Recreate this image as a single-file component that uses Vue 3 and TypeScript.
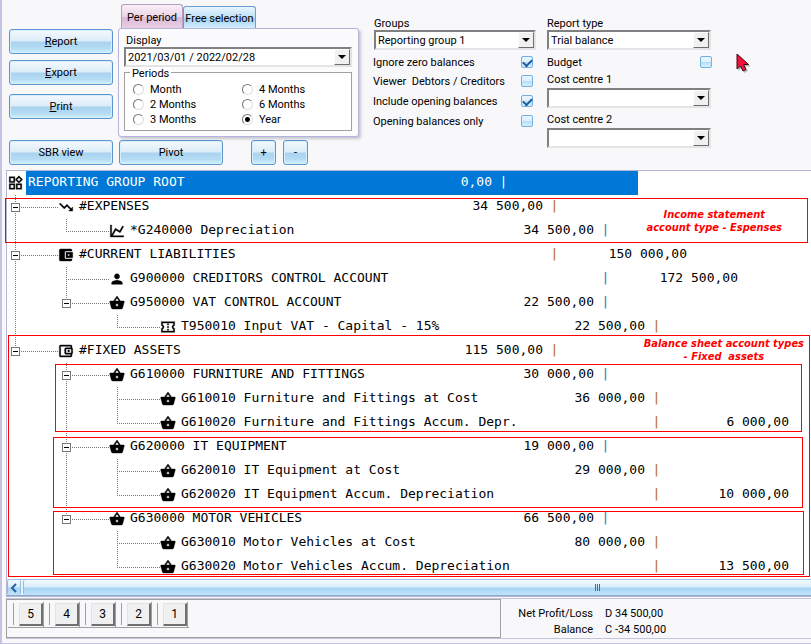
<script setup lang="ts">
import { ref } from 'vue'

type IconName = 'root' | 'down' | 'chart' | 'wallet' | 'walletOutline' | 'person' | 'basket' | 'ticket'
type Guide = 'none' | 'line' | 'tee' | 'end'

interface TreeRow {
  icon: IconName
  label: string
  debit?: string
  credit?: string
  guides: Guide[]
  toggle?: boolean
}

const icons: Record<IconName, string> = {
  root: 'M2 2h9v9H2zM4 4v5h5V4zM2 13h9v9H2zm2 2v5h5v-5zM13 13h9v9h-9zm2 2v5h5v-5zM17.500 .500l6 6-6 6-6-6zm0 3l-3 3 3 3 3-3z',
  down: 'M16 18l2.29-2.29-4.88-4.88-4 4L2 7.41 3.41 6l6 6 4-4 6.3 6.29L22 12v6z',
  chart: 'M16 11.78l4.24-7.33 1.73 1-5.23 9.05-6.51-3.75L5.46 19H22v2H2V3h2v14.54L9.5 8z',
  wallet: 'M21 18v1c0 1.1-.9 2-2 2H4c-1.11 0-2-.9-2-2V5c0-1.1.89-2 2-2h15c1.1 0 2 .9 2 2v1h-9c-1.11 0-2 .9-2 2v8c0 1.1.89 2 2 2zm-9-2h10V8H12zm4-2.5a1.5 1.5 0 1 1 0-3 1.5 1.5 0 0 1 0 3z',
  walletOutline: 'M4 3h15a2 2 0 0 1 2 2v2.300a2 2 0 0 1 1 1.700v6a2 2 0 0 1-1 1.700V19a2 2 0 0 1-2 2H4a2 2 0 0 1-2-2V5a2 2 0 0 1 2-2zm0 2v14h15v-2h-7a2 2 0 0 1-2-2V9a2 2 0 0 1 2-2h7V5zm8 4v6h8V9zm4 4.500a1.500 1.500 0 1 1 0-3 1.500 1.500 0 0 1 0 3z',
  person: 'M12 12c2.21 0 4-1.79 4-4s-1.79-4-4-4-4 1.79-4 4 1.79 4 4 4zm0 2c-2.67 0-8 1.34-8 4v2h16v-2c0-2.66-5.33-4-8-4z',
  basket: 'M17.21 9l-4.38-6.56c-.19-.28-.51-.42-.83-.42-.32 0-.64.14-.83.43L6.79 9H2c-.55 0-1 .45-1 1 0 .09.01.18.04.27l2.54 9.27c.23.84 1 1.46 1.92 1.46h13c.92 0 1.69-.62 1.93-1.46l2.54-9.27L23 10c0-.55-.45-1-1-1h-4.79zM9 9l3-4.4L15 9H9zm3 8c-1.1 0-2-.9-2-2s.9-2 2-2 2 .9 2 2-.9 2-2 2z',
  ticket: 'M22 10V4H2v6c1.1 0 2 .9 2 2s-.9 2-2 2v6h20v-6c-1.100 0-2-.9-2-2s.9-2 2-2zm-2-1.460c-1.190.69-2 1.990-2 3.460s.81 2.770 2 3.460V18H4v-2.540c1.190-.69 2-1.990 2-3.460s-.81-2.770-2-3.460V6h16zM11 15h2v2h-2zm0-4h2v2h-2zm0-4h2v2h-2z',
}

const rows: TreeRow[] = [
  { icon: 'down', label: '#EXPENSES', debit: '34 500,00', guides: ['tee'], toggle: true },
  { icon: 'chart', label: '*G240000 Depreciation', debit: '34 500,00', guides: ['line', 'end'] },
  { icon: 'wallet', label: '#CURRENT LIABILITIES', credit: '150 000,00', guides: ['tee'], toggle: true },
  { icon: 'person', label: 'G900000 CREDITORS CONTROL ACCOUNT', credit: '172 500,00', guides: ['line', 'tee'] },
  { icon: 'basket', label: 'G950000 VAT CONTROL ACCOUNT', debit: '22 500,00', guides: ['line', 'end'], toggle: true },
  { icon: 'ticket', label: 'T950010 Input VAT - Capital - 15%', debit: '22 500,00', guides: ['line', 'none', 'end'] },
  { icon: 'walletOutline', label: '#FIXED ASSETS', debit: '115 500,00', guides: ['end'], toggle: true },
  { icon: 'basket', label: 'G610000 FURNITURE AND FITTINGS', debit: '30 000,00', guides: ['none', 'tee'], toggle: true },
  { icon: 'basket', label: 'G610010 Furniture and Fittings at Cost', debit: '36 000,00', guides: ['none', 'line', 'tee'] },
  { icon: 'basket', label: 'G610020 Furniture and Fittings Accum. Depr.', credit: '6 000,00', guides: ['none', 'line', 'end'] },
  { icon: 'basket', label: 'G620000 IT EQUIPMENT', debit: '19 000,00', guides: ['none', 'tee'], toggle: true },
  { icon: 'basket', label: 'G620010 IT Equipment at Cost', debit: '29 000,00', guides: ['none', 'line', 'tee'] },
  { icon: 'basket', label: 'G620020 IT Equipment Accum. Depreciation', credit: '10 000,00', guides: ['none', 'line', 'end'] },
  { icon: 'basket', label: 'G630000 MOTOR VEHICLES', debit: '66 500,00', guides: ['none', 'end'], toggle: true },
  { icon: 'basket', label: 'G630010 Motor Vehicles at Cost', debit: '80 000,00', guides: ['none', 'none', 'tee'] },
  { icon: 'basket', label: 'G630020 Motor Vehicles Accum. Depreciation', credit: '13 500,00', guides: ['none', 'none', 'end'] },
]

const periods = ['Month', '4 Months', '2 Months', '6 Months', '3 Months', 'Year']
const period = ref('Year')
const options = ref([
  { id: 'zero', label: 'Ignore zero balances', on: true },
  { id: 'viewer', label: 'Viewer  Debtors / Creditors', on: false },
  { id: 'include', label: 'Include opening balances', on: true },
  { id: 'only', label: 'Opening balances only', on: false },
])
const budget = ref(false)
const levels = [5, 4, 3, 2, 1]
</script>

<template>
  <main class="window">
    <section class="controls">
      <div class="left">
        <div class="upper">
          <div class="actions">
            <button class="btn"><u>R</u>eport</button>
            <button class="btn"><u>E</u>xport</button>
            <button class="btn print"><u>P</u>rint</button>
          </div>
          <div class="tabbed">
            <div class="tabs">
              <button class="tab active">Per period</button>
              <button class="tab">Free selection</button>
            </div>
            <div class="tab-panel">
              <label for="display">Display</label>
              <div class="combo">
                <select id="display"><option>2021/03/01 / 2022/02/28</option></select>
                <span class="arrow"></span>
              </div>
              <fieldset>
                <legend>Periods</legend>
                <label v-for="p in periods" :key="p" class="radio">
                  <input v-model="period" type="radio" name="period" :value="p" />{{ p }}
                </label>
              </fieldset>
            </div>
          </div>
        </div>
        <div class="lower">
          <button class="btn">SBR view</button>
          <button class="btn">Pivot</button>
          <button class="btn small plus">+</button>
          <button class="btn small">-</button>
        </div>
      </div>

      <div class="groups">
        <label for="groups">Groups</label>
        <div class="combo">
          <select id="groups"><option>Reporting group 1</option></select>
          <span class="arrow"></span>
        </div>
        <div class="checks">
          <label v-for="o in options" :key="o.id" class="check">
            <span>{{ o.label }}</span><input v-model="o.on" type="checkbox" />
          </label>
        </div>
      </div>

      <div class="types">
        <label for="type">Report type</label>
        <div class="combo">
          <select id="type"><option>Trial balance</option></select>
          <span class="arrow"></span>
        </div>
        <label class="check budget"><span>Budget</span><input v-model="budget" type="checkbox" /></label>
        <label for="cc1">Cost centre 1</label>
        <div class="combo cost">
          <select id="cc1"><option></option></select>
          <span class="arrow"></span>
        </div>
        <label for="cc2">Cost centre 2</label>
        <div class="combo">
          <select id="cc2"><option></option></select>
          <span class="arrow"></span>
        </div>
      </div>

      <svg class="cursor" width="16" height="22" viewBox="0 0 16 22">
        <path d="M2.500 2v16l3.500-3 2.500 5 3.500-2-2.500-4.500h5z" fill="#b9b9be" />
        <path d="M1 1v15l3.500-3 2.500 5 3-1.500-2.500-5h5z" fill="#f5103c" stroke="#3a0a14" />
      </svg>
    </section>

    <section class="tree-panel">
      <div class="tree" role="tree">
        <div class="row root" role="treeitem">
          <svg class="icon" viewBox="0 0 24 24"><path fill-rule="evenodd" :d="icons.root" /></svg>
          <div class="cells selected">
            <span>REPORTING GROUP ROOT</span><span class="num">0,00</span><span class="pipe">|</span><span></span>
          </div>
        </div>
        <div v-for="r in rows" :key="r.label" class="row" role="treeitem">
          <span v-for="(g, i) in r.guides" :key="i" class="guide" :class="g">
            <button v-if="r.toggle && i === r.guides.length - 1" class="toggle" aria-label="Collapse"></button>
          </span>
          <svg class="icon" viewBox="0 0 24 24"><path fill-rule="evenodd" :d="icons[r.icon]" /></svg>
          <div class="cells">
            <span>{{ r.label }}</span>
            <span class="num">{{ r.debit }}</span>
            <span class="pipe" :class="{ blue: r.guides.length === 2 }">|</span>
            <span class="num">{{ r.credit }}</span>
          </div>
        </div>
      </div>

      <div class="mark income"><p>Income statement<br />account type - Espenses</p></div>
      <div class="mark balance"><p>Balance sheet account types<br />- Fixed&nbsp; assets</p></div>
      <div class="mark furniture"></div>
      <div class="mark equipment"></div>
      <div class="mark vehicles"></div>

      <div class="scrollbar">
        <button class="scroll-left" aria-label="Scroll left">
          <svg width="8" height="10" viewBox="0 0 8 10"><path d="M6 1L2 5l4 4" fill="none" stroke="#2c62a8" stroke-width="2" /></svg>
        </button>
        <div class="thumb"><i></i><i></i><i></i></div>
      </div>
    </section>

    <footer class="status">
      <div class="levels">
        <div class="toolbar">
          <div v-for="n in levels" :key="n" class="slot"><button>{{ n }}</button></div>
        </div>
      </div>
      <dl class="totals">
        <dt>Net Profit/Loss</dt><dd>D 34 500,00</dd>
        <dt>Balance</dt><dd>C -34 500,00</dd>
      </dl>
    </footer>
  </main>
</template>

<style>
body {
  margin: 0;
  background: #f8f8fb;
}
</style>

<style scoped>
* {
  box-sizing: border-box;
}
.window {
  border-left: 2px solid #c3c3e2;
  border-bottom: 1px solid #c3c3e2;
  padding-bottom: 4px;
  overflow: hidden;
  background: #f8f8fb;
  color: #000;
  font: 11px/18px Roboto, "Liberation Sans", sans-serif;
}
button,
select,
input {
  font: inherit;
  color: inherit;
  margin: 0;
}
.controls {
  display: flex;
  height: 170px;
  padding-left: 7px;
}
.left {
  width: 365px;
}
.upper {
  display: flex;
  gap: 5px;
  height: 140px;
}
.actions {
  display: flex;
  flex-direction: column;
  gap: 6px;
  padding-top: 29px;
}
.btn {
  width: 104px;
  height: 25px;
  padding: 0;
  border: 1px solid #5c94cc;
  border-radius: 3px;
  box-shadow: inset 0 0 0 1px #d8effc;
  background: linear-gradient(#f4f9fd, #dcecf8 48%, #a9d2ee 52%, #b4dcf4 80%, #d0f0ff);
}
.print {
  margin-top: 3px;
}
.lower {
  display: flex;
  gap: 6px;
}
.small {
  width: 25px;
}
.plus {
  margin: 0 1px 0 22px;
}
.tabs {
  display: flex;
  align-items: flex-end;
  height: 28px;
  padding: 4px 0 0 3px;
}
.tab {
  width: 73px;
  height: 22px;
  padding: 3px 0 0;
  border: 1px solid #6a9fd6;
  border-bottom: 0;
  border-radius: 3px 3px 0 0;
  background: linear-gradient(#e8f4fd, #bfe0f7 50%, #a4d2f2 55%, #d4eefc);
  white-space: nowrap;
}
.tab.active {
  width: 62px;
  height: 24px;
  border-color: #b79cc0;
  background: linear-gradient(#f8eef6, #ecd6e8 50%, #dcb9d6 55%, #e8cfe4);
}
.tab-panel {
  width: 241px;
  height: 109px;
  padding: 3px 6px 4px 5px;
  border: 1px solid #b4b4dc;
  border-radius: 3px;
  background: #fbfbfd;
  box-shadow: 2px 2px 3px #c4c4cc;
}
.tab-panel > label {
  display: block;
  height: 15px;
  padding-left: 2px;
  line-height: 17px;
}
.combo {
  position: relative;
  height: 20px;
  border: 2px solid;
  border-color: #808080 #e4e4e4 #e4e4e4 #808080;
  background: #fff;
}
.combo select {
  display: block;
  width: 100%;
  height: 16px;
  padding: 1px 0 0 2px;
  border: 0;
  appearance: none;
  background: none;
  line-height: 16px;
}
.arrow {
  position: absolute;
  top: 0;
  right: 0;
  width: 16px;
  height: 16px;
  border: 1px solid;
  border-color: #fff #6e6e6e #6e6e6e #fff;
  background: #f0f0f0;
  pointer-events: none;
}
.arrow::after {
  content: "";
  display: block;
  margin: 5px 0 0 3px;
  width: 0;
  border: 4px solid transparent;
  border-top-color: #000;
  border-bottom: 0;
}
fieldset {
  position: relative;
  display: grid;
  grid-template-columns: 109px 1fr;
  margin: 5px 0 0;
  padding: 9px 0 3px 8px;
  border: 1px solid #a0a0a0;
  background: #fff;
}
legend {
  position: absolute;
  top: -6px;
  left: 5px;
  padding: 0 2px;
  background: #fff;
  line-height: 14px;
}
.radio {
  display: flex;
  align-items: center;
  gap: 6px;
  height: 15px;
}
.radio input {
  appearance: none;
  width: 11px;
  height: 11px;
  border: 1px solid;
  border-color: #777 #ddd #ddd #777;
  border-radius: 50%;
  background: #fff;
}
.radio input:checked {
  background: radial-gradient(circle, #000 2px, #fff 3px);
}
.groups {
  width: 162px;
  padding-top: 15px;
}
.groups > label,
.types > label {
  display: block;
  height: 15px;
}
.checks {
  display: grid;
  grid-template-rows: 18px 19px 21px 20px;
  margin: 3px 3px 0 -1px;
}
.check {
  display: flex;
  align-items: center;
  justify-content: space-between;
  white-space: pre;
}
.check span {
  padding-top: 2px;
}
.check input {
  appearance: none;
  width: 12px;
  height: 12px;
  border: 1px solid #72b0e2;
  border-radius: 2px;
  background: linear-gradient(#eaf6fe, #dcf0fd 45%, #b4dcf8 50%, #d6f1ff);
}
.check input:checked::after {
  content: "";
  display: block;
  width: 7px;
  height: 4px;
  margin: 2px 0 0 1px;
  border: solid #1f5c9c;
  border-width: 0 0 2px 2px;
  transform: rotate(-45deg);
}
.types {
  width: 164px;
  margin-left: 11px;
  padding-top: 15px;
}
.types > .budget {
  display: flex;
  height: 18px;
  margin: 3px -1px 0 0;
}
.cost {
  margin: 2px 0 3px;
}
.types > .combo:last-child {
  margin-top: 2px;
}
.cursor {
  margin: 53px 0 0 25px;
}
.tree-panel {
  position: relative;
  margin-left: 4px;
  border: solid #b4b4d8;
  border-width: 1px 0 1px 1px;
  background: #fff;
}
.tree {
  overflow: hidden;
  font-family: "DejaVu Sans Mono", "Liberation Mono", monospace;
  font-size: 13px;
  white-space: pre;
}
.row {
  display: flex;
  height: 24px;
}
.icon {
  flex: none;
  width: 16px;
  height: 16px;
  margin: 4px 3px 0 0;
  stroke: #000;
  stroke-width: 0.6;
}
.root .icon {
  width: 15px;
  margin-left: 1px;
}
.cells {
  flex: none;
  display: grid;
  grid-template-columns: 345px 119px 23px 121px;
  padding-left: 2px;
  line-height: 22px;
  width: 612px;
}
.selected {
  background: #0078d7;
  color: #fff;
}
.num {
  text-align: right;
}
.pipe {
  text-align: center;
  color: #b8640c;
}
.pipe.blue {
  color: #2478b4;
}
.selected .pipe {
  color: #fff;
}
.guide {
  flex: none;
  width: 51px;
  height: 24px;
  padding: 8px 0 0 4px;
  background-repeat: no-repeat;
  background-position: 8px 0, 9px 12px;
}
.toggle {
  display: block;
  width: 9px;
  height: 9px;
  padding: 0;
  border: 1px solid #777;
  background: linear-gradient(#000, #000) center / 5px 1px no-repeat #fff;
}
.line,
.tee,
.end {
  background-image: repeating-linear-gradient(#777 0 1px, transparent 1px 2px);
  background-size: 1px 24px;
}
.tee,
.end {
  background-image: repeating-linear-gradient(#777 0 1px, transparent 1px 2px),
    repeating-linear-gradient(90deg, transparent 0 1px, #777 1px 2px);
  background-size: 1px 24px, 42px 1px;
}
.end {
  background-size: 1px 13px, 42px 1px;
}
.mark {
  position: absolute;
  border: 1px solid #f00;
  color: #f00;
  font: italic bold 11px/13px "DejaVu Sans Condensed", "DejaVu Sans", sans-serif;
  text-align: center;
  pointer-events: none;
}
.mark p {
  position: absolute;
  margin: 0;
  white-space: nowrap;
}
.income {
  top: 27px;
  left: -2px;
  right: 3px;
  height: 45px;
}
.income p {
  top: 9px;
  right: 25px;
}
.balance {
  top: 164px;
  left: 1px;
  right: 1px;
  height: 242px;
}
.balance p {
  top: 1px;
  right: 5px;
}
.furniture {
  top: 193px;
  left: 48px;
  right: 9px;
  height: 68px;
}
.equipment {
  top: 266px;
  left: 46px;
  right: 8px;
  height: 71px;
}
.vehicles {
  top: 340px;
  left: 46px;
  right: 7px;
  height: 64px;
}
.scrollbar {
  display: flex;
  gap: 2px;
  height: 17px;
  border-top: 1px solid #a4c4e4;
  border-bottom: 1px solid #8fa8cc;
  background: #e6f4fd;
}
.scroll-left,
.thumb {
  border: 1px solid #8fbce4;
  border-width: 0 1px;
  border-radius: 2px;
  background: linear-gradient(#f2f9fe, #d8eefb 48%, #a4d4f4 52%, #c0e4fa);
}
.scroll-left {
  display: flex;
  align-items: center;
  justify-content: center;
  width: 14px;
  padding: 0;
}
.thumb {
  flex: 1;
  display: flex;
  align-items: center;
  justify-content: center;
  gap: 1px;
  margin-right: -404px;
  padding-right: 44px;
}
.thumb i {
  width: 1px;
  height: 7px;
  background: #3c6ca8;
}
.status {
  display: flex;
  margin: 1px 0 0 4px;
  border: solid #c3c3e2;
  border-width: 1px 0;
}
.levels {
  width: 495px;
  height: 39px;
  padding: 2px 0 0 1px;
  border: 1px solid #a0a0a0;
}
.toolbar {
  display: flex;
  width: 181px;
  border-bottom: 1px solid #a0a0a0;
}
.slot {
  display: flex;
  width: 36px;
  height: 25px;
  padding: 1px 0 0 5px;
  border-right: 1px solid #a0a0a0;
}
.slot::before {
  content: "";
  width: 1px;
  height: 22px;
  margin-right: 5px;
  background: #a0a0a0;
}
.slot button {
  width: 24px;
  height: 23px;
  padding: 0;
  border: solid;
  border-width: 1px 2px 2px 1px;
  border-color: #e4e4e4 #707070 #707070 #e4e4e4;
  background: #f0f0f0;
  font-size: 12px;
}
.totals {
  display: grid;
  grid-template-columns: 92px auto;
  grid-auto-rows: 16px;
  column-gap: 12px;
  align-content: start;
  margin: 0;
  padding-top: 6px;
}
.totals dt {
  text-align: right;
}
.totals dd {
  margin: 0;
}
</style>
